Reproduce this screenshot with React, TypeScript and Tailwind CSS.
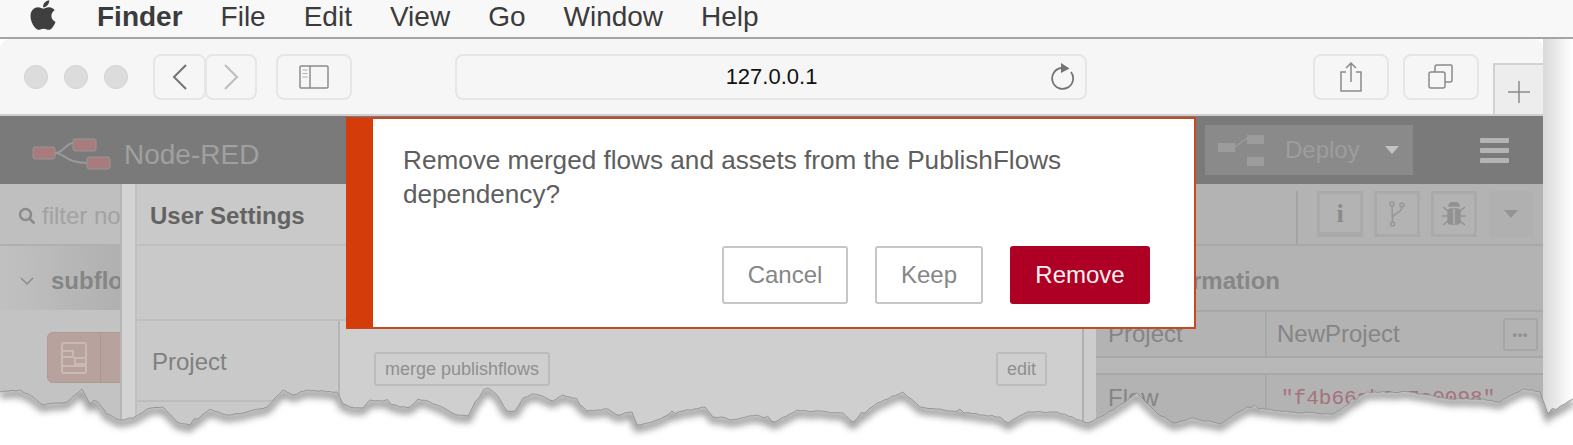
import { FaApple } from "react-icons/fa"

// hand-read outline of the torn paper edge
const tearPoints: [number, number][] = [
  [0, 392], [20, 390], [33, 397], [43, 405], [67, 402], [82, 389], [90, 404], [98, 402], [107, 414], [120, 420],
  [133, 418], [147, 409], [163, 407], [177, 422], [190, 425], [210, 409], [227, 415], [247, 412], [267, 407],
  [283, 390], [293, 395], [307, 390], [337, 392], [343, 404], [350, 407], [363, 408], [370, 400], [383, 401],
  [400, 407], [410, 407], [418, 399], [428, 401], [437, 405], [457, 415], [468, 416], [475, 402], [488, 388],
  [497, 395], [507, 411], [515, 411], [523, 398], [532, 394], [542, 396], [553, 401], [563, 395], [573, 398],
  [587, 411], [597, 410], [608, 409], [617, 415], [632, 412], [637, 425], [652, 422], [668, 415], [683, 411],
  [705, 407], [713, 417], [722, 417], [730, 420], [757, 415], [775, 422], [797, 410], [843, 413], [853, 422],
  [877, 403], [903, 392], [920, 407], [1000, 417], [1008, 423], [1027, 412], [1057, 412], [1088, 423],
  [1113, 410], [1137, 393], [1157, 413], [1173, 423], [1193, 418], [1220, 424], [1247, 407], [1290, 412],
  [1333, 414], [1367, 392], [1410, 392], [1450, 399], [1483, 399], [1500, 402], [1523, 389], [1540, 392],
  [1548, 414], [1573, 399],
]

// adds the small paper fibres between the read points
function buildTear() {
  const out: string[] = []
  let seed = 7
  for (let i = 0; i < tearPoints.length - 1; i++) {
    const [x1, y1] = tearPoints[i]
    const [x2, y2] = tearPoints[i + 1]
    const steps = Math.max(1, Math.round((x2 - x1) / 4))
    for (let s = 0; s < steps; s++) {
      seed = (seed * 31 + 11) % 101
      const t = s / steps
      const jitter = s === 0 ? 0 : seed % 7 === 0 ? -3 : ((seed % 3) - 1) * 0.5
      out.push(`${(x1 + (x2 - x1) * t).toFixed(1)},${(y1 + (y2 - y1) * t + jitter).toFixed(1)}`)
    }
  }
  out.push("1573,399")
  return out.join(" L")
}

const tearLine = "M" + buildTear()
const tearFill = tearLine + " L1573,445 L0,445 Z"

function TornEdge() {
  return (
    <svg className="absolute top-0 left-0" width="1573" height="445" viewBox="0 0 1573 445">
      <defs>
        <clipPath id="paper">
          <path d={tearFill} />
        </clipPath>
        <filter id="soft" x="-5%" y="-50%" width="110%" height="200%">
          <feGaussianBlur stdDeviation="3.5" />
        </filter>
      </defs>
      <path d={tearFill} fill="#ffffff" />
      <g clipPath="url(#paper)">
        <path d={tearLine} fill="none" stroke="#000000" strokeOpacity="0.42" strokeWidth="7" filter="url(#soft)" transform="translate(0 3)" />
      </g>
      <path d={tearLine} fill="none" stroke="#8a8a8a" strokeWidth="0.8" />
    </svg>
  )
}

function ToolButton({ className, children }: { className: string; children?: React.ReactNode }) {
  return (
    <div className={`h-[46px] flex items-center justify-center rounded-[8px] border-2 border-[#e6e6e6] bg-[#f6f6f6] ${className}`}>
      {children}
    </div>
  )
}

function Toolbar() {
  return (
    <div className="relative h-[77px] shrink-0 flex items-center bg-[#f6f6f6] pl-[24px] border-b-2 border-[#cfcfcf]">
      <div className="flex gap-[16px]">
        <div className="w-[24px] h-[24px] rounded-full bg-[#dcdcdc] border border-[#d2d2d2]" />
        <div className="w-[24px] h-[24px] rounded-full bg-[#dcdcdc] border border-[#d2d2d2]" />
        <div className="w-[24px] h-[24px] rounded-full bg-[#dcdcdc] border border-[#d2d2d2]" />
      </div>
      <div className="flex ml-[25px]">
        <ToolButton className="w-[53px]">
          <svg width="16" height="26" viewBox="0 0 16 26" fill="none" stroke="#747474" strokeWidth="2">
            <path d="M14 1 2 13l12 12" />
          </svg>
        </ToolButton>
        <ToolButton className="w-[52px] -ml-[1px]">
          <svg width="16" height="26" viewBox="0 0 16 26" fill="none" stroke="#bdbdbd" strokeWidth="2">
            <path d="M2 1l12 12L2 25" />
          </svg>
        </ToolButton>
      </div>
      <ToolButton className="w-[76px] ml-[19px]">
        <svg width="30" height="24" viewBox="0 0 30 24" fill="none" stroke="#8c8c8c" strokeWidth="1.5">
          <rect x="1" y="1" width="28" height="22" rx="1" />
          <path d="M11 1v22" />
          <path d="M3.5 5h5M3.5 8.5h5M3.5 12h5" strokeWidth="1.2" stroke="#b0b0b0" />
        </svg>
      </ToolButton>
      <ToolButton className="w-[632px] ml-[103px] relative">
        <span className="text-[22px] text-[#111] ml-[1px]">127.0.0.1</span>
        <svg className="absolute right-[10px] top-[7px]" width="24" height="28" viewBox="0 0 24 28" fill="none">
          <path d="M10 5a10.500 10.500 0 1 0 10 4" stroke="#747474" strokeWidth="1.8" />
          <path d="M10 0l8.500 5.500L10 10z" fill="#747474" />
        </svg>
      </ToolButton>
      <ToolButton className="w-[76px] ml-[226px]">
        <svg width="24" height="32" viewBox="0 0 24 32" fill="none" stroke="#8a8a8a" strokeWidth="1.5">
          <path d="M7 11H2v19h20V11h-5" />
          <path d="M12 21V2M7 7l5-5 5 5" />
        </svg>
      </ToolButton>
      <ToolButton className="w-[76px] ml-[14px]">
        <svg width="26" height="26" viewBox="0 0 26 26" fill="none" stroke="#8a8a8a" strokeWidth="1.5">
          <rect x="1" y="8" width="16" height="16" rx="2" />
          <path d="M7 8V3a2 2 0 0 1 2-2h14a1 1 0 0 1 1 1v14a2 2 0 0 1-2 2h-5" />
        </svg>
      </ToolButton>
      <div className="absolute right-0 bottom-0 w-[50px] h-[51px] bg-[#ededed] border-l-2 border-t-2 border-[#d2d2d2] flex items-center justify-center pt-[4px]">
        <svg width="24" height="24" viewBox="0 0 24 24" stroke="#8a8a8a" strokeWidth="1.5">
          <path d="M12 1v22M1 12h22" />
        </svg>
      </div>
    </div>
  )
}

function AppHeader() {
  return (
    <div className="h-[68px] shrink-0 flex items-center bg-[#7a7a7a] pl-[32px]">
      <div className="flex items-center mt-[10px]">
        <svg width="80" height="34" viewBox="0 0 80 34" fill="none">
          <path d="M23 15c9 0 10-10 19-10M23 15c9 0 11 10 32 10" stroke="#999999" strokeWidth="2" />
          <rect x="1" y="9" width="22" height="12" rx="2" fill="#a87c7c" stroke="#969696" />
          <rect x="41" y="1" width="23" height="12" rx="2" fill="#a87c7c" stroke="#969696" />
          <rect x="55" y="19" width="23" height="12" rx="2" fill="#a87c7c" stroke="#969696" />
        </svg>
        <span className="ml-[12px] text-[28px] text-[#a0a0a0]">Node-RED</span>
      </div>
      <div className="ml-auto w-[208px] h-[50px] flex items-center bg-[#8a8a8a] pl-[13px]">
        <svg width="48" height="32" viewBox="0 0 48 32" fill="#9c9c9c">
          <rect x="0" y="9" width="17" height="9" />
          <rect x="29" y="1" width="17" height="9" />
          <rect x="29" y="23" width="17" height="9" />
          <path d="M17 13l12-9" stroke="#9c9c9c" strokeWidth="1.5" />
        </svg>
        <span className="ml-[19px] text-[24px] text-[#9d9d9d]">Deploy</span>
        <span className="ml-[25px] w-0 h-0 border-l-[7px] border-r-[7px] border-t-[8px] border-l-transparent border-r-transparent border-t-[#c2c2c2]" />
      </div>
      <div className="ml-[67px] mr-[34px] w-[29px] flex flex-col gap-[5px]">
        <div className="h-[5px] bg-[#b4b4b4] rounded-[1px]" />
        <div className="h-[5px] bg-[#b4b4b4] rounded-[1px]" />
        <div className="h-[5px] bg-[#b4b4b4] rounded-[1px]" />
      </div>
    </div>
  )
}

function Palette() {
  return (
    <div className="w-[122px] shrink-0 overflow-hidden bg-[#c3c3c3] border-r-2 border-[#b6b6b6]">
      <div className="h-[62px] flex items-center pl-[18px] pt-[3px] bg-[#bfbfbf] border-b-2 border-[#b0b0b0] whitespace-nowrap">
        <svg className="shrink-0" width="18" height="18" viewBox="0 0 18 18" fill="none" stroke="#8b8b8b" strokeWidth="2.5">
          <circle cx="7.500" cy="7.500" r="5.500" />
          <path d="M11.500 11.500l5 5" />
        </svg>
        <span className="ml-[6px] text-[24px] text-[#a2a2a2]">filter nodes</span>
      </div>
      <div className="h-[64px] flex items-center pl-[20px] pt-[5px] bg-gradient-to-r from-[#c1c1c1] to-[#b0b0b0] whitespace-nowrap">
        <svg className="shrink-0" width="14" height="10" viewBox="0 0 14 10" fill="none" stroke="#8d8d8d" strokeWidth="1.5">
          <path d="M1 2l6 6 6-6" />
        </svg>
        <span className="ml-[17px] text-[24px] font-bold text-[#858585]">subflows</span>
      </div>
      <div className="mt-[22px] ml-[47px] w-[100px] h-[51px] flex rounded-[6px] bg-[#b7a29d] border border-[#ad9b96]">
        <div className="w-[53px] shrink-0 flex items-center justify-center border-r border-[#a99690]">
          <svg width="26" height="32" viewBox="0 0 26 32" fill="none" stroke="#c9b9b5" strokeWidth="2">
            <rect x="1" y="1" width="24" height="30" rx="2" />
            <path d="M1 9h11v6H1M25 16H14v6h11M1 24h24" />
          </svg>
        </div>
      </div>
    </div>
  )
}

function SettingsTray() {
  return (
    <div className="flex flex-1 min-w-0">
      <div className="w-[13px] shrink-0 bg-[#d3d3d3]" />
      <div className="flex-1 min-w-0 flex flex-col bg-[#cfcfcf] border-l-2 border-[#c0c0c0]">
        <div className="h-[62px] shrink-0 flex items-center pl-[13px] pt-[3px] border-b-2 border-[#bfbfbf] bg-[#c9c9c9]">
          <span className="text-[24px] font-bold text-[#636363]">User Settings</span>
        </div>
        <div className="h-[75px] shrink-0 border-b-2 border-[#bfbfbf] bg-[#c9c9c9]" />
        <div className="flex flex-1">
          <div className="w-[203px] bg-[#c9c9c9] border-r-2 border-[#b5b5b5]">
            <div className="h-[81px] flex items-center pl-[15px] pt-[3px] border-b-2 border-[#bdbdbd]">
              <span className="text-[24px] text-[#808080]">Project</span>
            </div>
          </div>
          <div className="flex-1 flex justify-between items-start pt-[31px] pl-[34px] pr-[35px]">
            <span className="h-[34px] px-[9px] flex items-center rounded-[3px] border-2 border-[#bcbcbc] text-[18px] text-[#8f8f8f]">merge publishflows</span>
            <span className="h-[34px] px-[9px] flex items-center rounded-[3px] border-2 border-[#bcbcbc] text-[18px] text-[#8f8f8f]">edit</span>
          </div>
        </div>
      </div>
    </div>
  )
}

function SideTab({ className, children }: { className?: string; children: React.ReactNode }) {
  return <div className={`w-[46px] h-[46px] flex items-center justify-center border-[3px] border-[#aaaaaa] ${className ?? ""}`}>{children}</div>
}

function InfoSidebar() {
  return (
    <div className="flex w-[461px] shrink-0">
      <div className="w-[14px] shrink-0 bg-[#cdcdcd] border-l-2 border-[#b0b0b0]" />
      <div className="flex-1 min-w-0 bg-[#b3b3b3]">
        <div className="h-[62px] flex items-start pt-[7px] border-b-2 border-[#a8a8a8] pr-[8px]">
          <div className="ml-[150px] w-[52px] h-[53px] border-r-2 border-[#a4a4a4]" />
          <div className="ml-[19px] flex gap-[11px]">
            <SideTab className="border-b-[5px]">
              <span className="text-[26px] font-bold font-['Liberation_Serif',serif] text-[#8a8a8a]">i</span>
            </SideTab>
            <SideTab>
              <svg width="16" height="26" viewBox="0 0 16 26" fill="none" stroke="#989898" strokeWidth="1.6">
                <circle cx="3" cy="3" r="2" />
                <circle cx="13" cy="4" r="2" />
                <circle cx="3.500" cy="23" r="2" />
                <path d="M3 5l.5 16M13 6c0 6-9 6-9.500 11" />
              </svg>
            </SideTab>
            <SideTab>
              <svg width="26" height="24" viewBox="0 0 26 24" fill="#929292" stroke="#929292" strokeWidth="1.5">
                <path d="M8 4a5 4 0 0 1 10 0z" />
                <rect x="7" y="7" width="12" height="15" rx="3" />
                <path d="M7 9 2 5M19 9l5-4M7 14H1M19 14h6M7 19l-5 4M19 19l5 4" fill="none" />
                <path d="M13 7v15" stroke="#b3b3b3" />
              </svg>
            </SideTab>
            <div className="w-[44px] h-[46px] ml-[1px] flex items-center justify-center bg-[#b0b0b0]">
              <span className="w-0 h-0 border-l-[7px] border-r-[7px] border-t-[8px] border-l-transparent border-r-transparent border-t-[#949494]" />
            </div>
          </div>
        </div>
        <div className="h-[64px] flex items-center pl-[52px] pt-[5px] text-[24px] font-bold text-[#868686]">Information</div>
        <div className="h-[48px] flex border-y-2 border-[#a8a8a8]">
          <div className="w-[171px] flex items-center pl-[12px] border-r-2 border-[#a9a9a9] text-[24px] text-[#858585]">Project</div>
          <div className="flex-1 flex items-center pl-[10px] text-[24px] text-[#858585]">NewProject</div>
          <div className="w-[35px] h-[33px] mt-[6px] mr-[5px] flex items-center justify-center rounded-[3px] border-2 border-[#a6a6a6] text-[12px] font-bold tracking-[1px] text-[#8f8f8f]">•••</div>
        </div>
        <div className="h-[17px] bg-[#b8b8b8] border-b-2 border-[#a8a8a8]" />
        <div className="flex">
          <div className="w-[171px] h-[60px] flex items-start pl-[12px] pt-[5px] border-r-2 border-[#a9a9a9] text-[24px] text-[#858585]">Flow</div>
          <div className="pl-[14px] pt-[8px] text-[21px] font-['Liberation_Mono',monospace] text-[#a5727c] whitespace-nowrap">"f4b66ab3.7c0098"</div>
        </div>
      </div>
    </div>
  )
}

function ConfirmDialog() {
  return (
    <div className="absolute left-[346px] top-[117px] w-[850px] h-[212px] bg-white border-2 border-[#c8481f] border-l-[27px] border-l-[#d43c0a] pl-[30px] pr-[44px] pt-[24px] flex flex-col">
      <p className="text-[26.15px] leading-[34px] text-[#5e5e5e]">
        Remove merged flows and assets from the PublishFlows dependency?
      </p>
      <div className="mt-auto mb-[23px] flex justify-end gap-[27px]">
        <button className="w-[126px] h-[58px] rounded-[3px] border-2 border-[#c6c6c6] bg-white text-[24px] text-[#868686]">Cancel</button>
        <button className="w-[108px] h-[58px] rounded-[3px] border-2 border-[#c6c6c6] bg-white text-[24px] text-[#868686]">Keep</button>
        <button className="w-[140px] h-[58px] rounded-[3px] bg-[#ad0024] text-[24px] text-[#fff0f2]">Remove</button>
      </div>
    </div>
  )
}

export default function App() {
  return (
    <div className="relative w-[1573px] h-[445px] overflow-hidden bg-white font-['Liberation_Sans',sans-serif]">
      {/* Mac menu bar */}
      <div className="h-[39px] flex items-center gap-[38px] bg-[#f8f8f8] border-b-2 border-[#a5a5a5] pl-[28px] pb-[4px] text-[28px] text-[#3b3b3b]">
        <FaApple className="w-[30px] h-[34px] -mt-[3px] mr-[1px] text-[#3f3f3f]" />
        <span className="font-bold">Finder</span>
        <span>File</span>
        <span>Edit</span>
        <span>View</span>
        <span>Go</span>
        <span>Window</span>
        <span>Help</span>
      </div>

      <div className="flex h-[406px]">
        <div className="w-[1543px] shrink-0 flex flex-col overflow-hidden rounded-t-[10px]">
          <Toolbar />
          <AppHeader />
          <div className="flex flex-1 min-h-0">
            <Palette />
            <SettingsTray />
            <InfoSidebar />
          </div>
        </div>
        <div className="flex-1 bg-gradient-to-r from-[#d9d9d9] to-white" />
      </div>

      <ConfirmDialog />
      <TornEdge />
    </div>
  )
}
